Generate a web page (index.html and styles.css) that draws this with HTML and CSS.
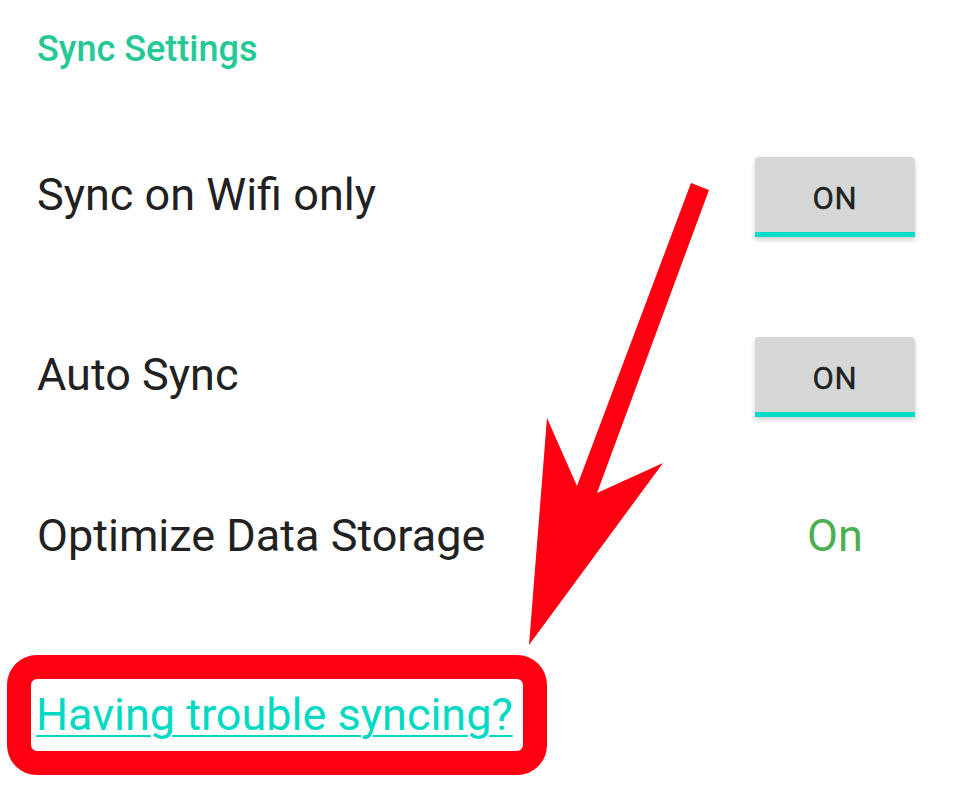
FILE: index.html
```html
<!DOCTYPE html>
<html lang="en">
<head>
<meta charset="utf-8">
<title>Sync Settings</title>
<link rel="stylesheet" href="styles.css">
</head>
<body>
<div class="screen">
  <div class="category">Sync Settings</div>
  <div class="list">
    <div class="row row-toggle">
      <span class="label">Sync on Wifi only</span>
      <button class="toggle" type="button">ON</button>
    </div>
    <div class="row row-toggle">
      <span class="label">Auto Sync</span>
      <button class="toggle" type="button">ON</button>
    </div>
    <div class="row row-value">
      <span class="label">Optimize Data Storage</span>
      <span class="value">On</span>
    </div>
  </div>
  <div class="trouble">
    <div class="highlight">
      <a class="trouble-link" href="#">Having trouble syncing?</a>
    </div>
  </div>
  <svg class="arrow" width="960" height="785" viewBox="0 0 960 785" aria-hidden="true">
    <polygon points="691,183 709,190 597,493 663,463 529,645 547,418 577,486" fill="#ff0012"/>
  </svg>
</div>
</body>
</html>
```
FILE: styles.css
```css
* { box-sizing: border-box; }
html, body { margin: 0; padding: 0; background: #ffffff; }
body {
  font-family: Roboto, "Noto Sans", "Liberation Sans", sans-serif;
  color: #212121;
  width: 960px;
  height: 785px;
  overflow: hidden;
}
.screen {
  position: relative;
  width: 960px;
  height: 785px;
}
.category {
  height: 98px;
  display: flex;
  align-items: center;
  padding-left: 37px;
  font-size: 36px;
  font-weight: 500;
  color: #26c996;
}
.list {
  padding-top: 7px;
}
.row {
  display: flex;
  align-items: center;
  justify-content: space-between;
  padding-left: 37px;
  padding-right: 45px;
}
.row-toggle { height: 180px; }
.row-value { height: 142px; }
.label {
  font-size: 45px;
  line-height: 60px;
  color: #212121;
}
.toggle {
  width: 160px;
  height: 80px;
  margin-top: 4px;
  border: none;
  border-bottom: 5px solid #00dcc6;
  border-radius: 4px 4px 0 0;
  background: #d6d7d7;
  box-shadow: 0 3px 5px rgba(0, 0, 0, 0.18);
  font-family: Roboto, "Noto Sans", "Liberation Sans", sans-serif;
  font-size: 31px;
  font-weight: 400;
  -webkit-text-stroke: 0.4px #212121;
  color: #212121;
  padding: 8px 0 0 0;
  letter-spacing: 0.8px;
}
.value {
  width: 160px;
  text-align: center;
  font-size: 45px;
  line-height: 60px;
  color: #4caf50;
}
.trouble {
  padding-top: 48px;
  padding-left: 7px;
}
.highlight {
  display: inline-block;
  width: 540px;
  height: 120px;
  border: 24px solid #ff0012;
  border-radius: 30px;
  padding-left: 5px;
  background: #ffffff;
}
.trouble-link {
  display: block;
  font-size: 45px;
  line-height: 72px;
  color: #00d9c4;
  text-decoration: underline;
  text-decoration-thickness: 2px;
  text-underline-offset: 5px;
}
.arrow {
  position: absolute;
  left: 0;
  top: 0;
  pointer-events: none;
}
```
